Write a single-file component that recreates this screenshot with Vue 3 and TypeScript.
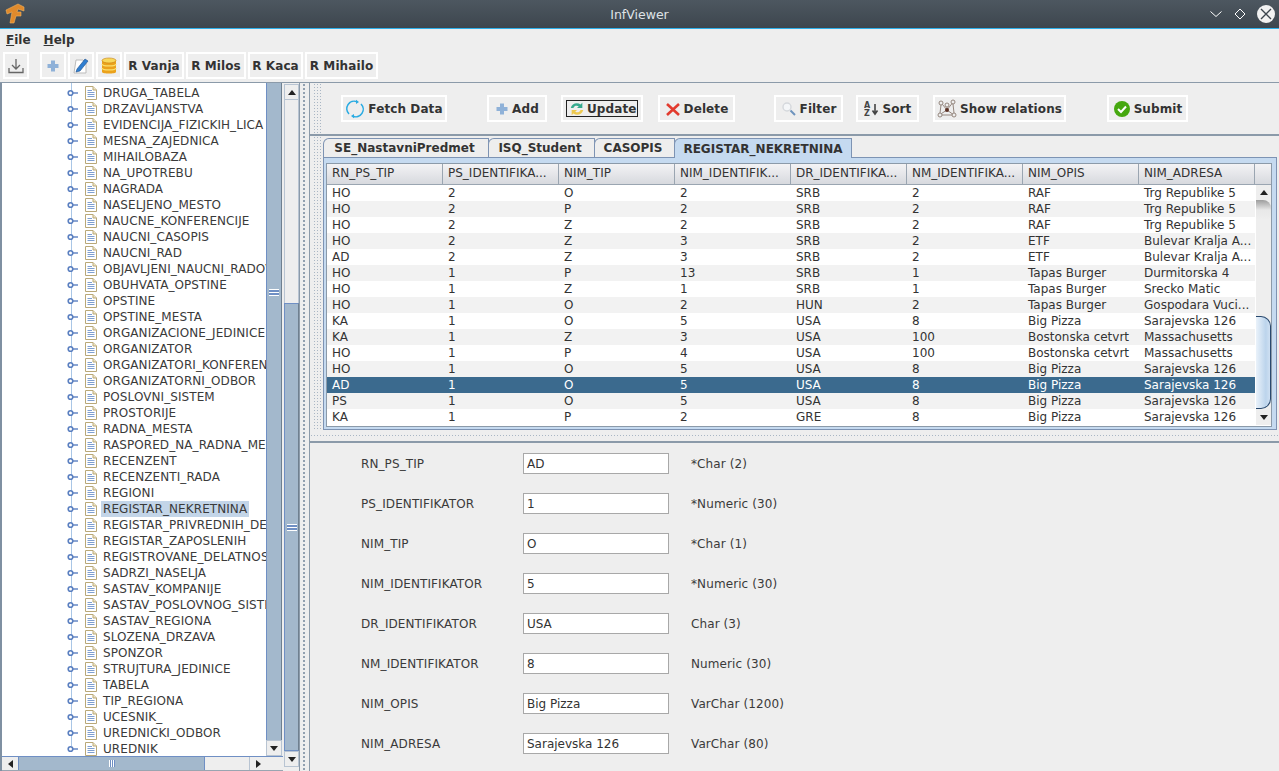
<script setup lang="ts">
const tree: string[] = ['DRUGA_TABELA','DRZAVLJANSTVA','EVIDENCIJA_FIZICKIH_LICA','MESNA_ZAJEDNICA','MIHAILOBAZA','NA_UPOTREBU','NAGRADA','NASELJENO_MESTO','NAUCNE_KONFERENCIJE','NAUCNI_CASOPIS','NAUCNI_RAD','OBJAVLJENI_NAUCNI_RADOVI','OBUHVATA_OPSTINE','OPSTINE','OPSTINE_MESTA','ORGANIZACIONE_JEDINICE','ORGANIZATOR','ORGANIZATORI_KONFERENCIJE','ORGANIZATORNI_ODBOR','POSLOVNI_SISTEM','PROSTORIJE','RADNA_MESTA','RASPORED_NA_RADNA_MESTA','RECENZENT','RECENZENTI_RADA','REGIONI','REGISTAR_NEKRETNINA','REGISTAR_PRIVREDNIH_DELATNOSTI','REGISTAR_ZAPOSLENIH','REGISTROVANE_DELATNOSTI','SADRZI_NASELJA','SASTAV_KOMPANIJE','SASTAV_POSLOVNOG_SISTEMA','SASTAV_REGIONA','SLOZENA_DRZAVA','SPONZOR','STRUJTURA_JEDINICE','TABELA','TIP_REGIONA','UCESNIK_','UREDNICKI_ODBOR','UREDNIK']
const columns: string[] = ['RN_PS_TIP','PS_IDENTIFIKA...','NIM_TIP','NIM_IDENTIFIK...','DR_IDENTIFIKA...','NM_IDENTIFIKA...','NIM_OPIS','NIM_ADRESA']
const rows: string[][] = [
['HO','2','O','2','SRB','2','RAF','Trg Republike 5'],
['HO','2','P','2','SRB','2','RAF','Trg Republike 5'],
['HO','2','Z','2','SRB','2','RAF','Trg Republike 5'],
['HO','2','Z','3','SRB','2','ETF','Bulevar Kralja A...'],
['AD','2','Z','3','SRB','2','ETF','Bulevar Kralja A...'],
['HO','1','P','13','SRB','1','Tapas Burger','Durmitorska 4'],
['HO','1','Z','1','SRB','1','Tapas Burger','Srecko Matic'],
['HO','1','O','2','HUN','2','Tapas Burger','Gospodara Vuci...'],
['KA','1','O','5','USA','8','Big Pizza','Sarajevska 126'],
['KA','1','Z','3','USA','100','Bostonska cetvrt','Massachusetts'],
['HO','1','P','4','USA','100','Bostonska cetvrt','Massachusetts'],
['HO','1','O','5','USA','8','Big Pizza','Sarajevska 126'],
['AD','1','O','5','USA','8','Big Pizza','Sarajevska 126'],
['PS','1','O','5','USA','8','Big Pizza','Sarajevska 126'],
['KA','1','P','2','GRE','8','Big Pizza','Sarajevska 126'],
]
const form = [
{l:'RN_PS_TIP',v:'AD',h:'*Char (2)'},
{l:'PS_IDENTIFIKATOR',v:'1',h:'*Numeric (30)'},
{l:'NIM_TIP',v:'O',h:'*Char (1)'},
{l:'NIM_IDENTIFIKATOR',v:'5',h:'*Numeric (30)'},
{l:'DR_IDENTIFIKATOR',v:'USA',h:'Char (3)'},
{l:'NM_IDENTIFIKATOR',v:'8',h:'Numeric (30)'},
{l:'NIM_OPIS',v:'Big Pizza',h:'VarChar (1200)'},
{l:'NIM_ADRESA',v:'Sarajevska 126',h:'VarChar (80)'},
]
const tools = [
{t:'R Vanja',w:60},{t:'R Milos',w:60},{t:'R Kaca',w:55},{t:'R Mihailo',w:73},
]
const tabs = [
{t:'SE_NastavniPredmet',w:166,a:false},{t:'ISQ_Student',w:107,a:false},{t:'CASOPIS',w:81,a:false},{t:'REGISTAR_NEKRETNINA',w:178,a:true},
]
const actions = [
{t:'Fetch Data',i:'fetch',w:106,m:31},{t:'Add',i:'add',w:60,m:40},{t:'Update',i:'update',w:82,m:14},{t:'Delete',i:'delete',w:77,m:15},
{t:'Filter',i:'filter',w:69,m:39},{t:'Sort',i:'sort',w:63,m:13},{t:'Show relations',i:'rel',w:133,m:14},{t:'Submit',i:'submit',w:81,m:41},
]
</script>

<template>
  <div class="app">
    <header class="title">
      <svg class="logo" width="22" height="22" viewBox="0 0 22 22"><path d="M2 7 L14 1 L20 4 L20 8 L14 6 L13 9 L17 9 L17 13 L12 13 L10 20 L6 20 L8 9 L3 11 Z" fill="#e08a2c" stroke="#f3b35e" stroke-width=".6"/></svg>
      <span class="title-text">InfViewer</span>
      <div class="winbtns">
        <svg width="14" height="14" viewBox="0 0 14 14"><path d="M1.5 4.5 L7 9.5 L12.5 4.5" fill="none" stroke="#fff" stroke-width="1"/></svg>
        <svg width="14" height="14" viewBox="0 0 14 14"><path d="M7 2 L12 7 L7 12 L2 7 Z" fill="none" stroke="#fff" stroke-width="1"/></svg>
        <span class="closeb"><svg width="18" height="18" viewBox="0 0 18 18"><path d="M4 4 L14 14 M14 4 L4 14" stroke="#3c454d" stroke-width="1.4"/></svg></span>
      </div>
    </header>
    <nav class="menu"><span><u>F</u>ile</span><span><u>H</u>elp</span></nav>
    <div class="toolbar">
      <button class="tb icon dl"><svg width="18" height="18" viewBox="0 0 18 18"><path d="M9 2 V12 M5 8 L9 12 L13 8 M2 11 V15.5 H16 V11" fill="none" stroke="#666" stroke-width="1.3"/></svg></button>
      <button class="tb icon first"><svg width="14" height="14" viewBox="0 0 14 14"><path d="M5 1.5 H9 V5 H12.5 V9 H9 V12.5 H5 V9 H1.5 V5 H5 Z" fill="#8fb1d8"/></svg></button>
      <button class="tb icon"><svg width="20" height="20" viewBox="0 0 20 20"><path d="M5 4 H12 L15 7 V17 H3 Z" fill="#fff" stroke="#bbb"/><path d="M6 13 L14 3 L17 5 L9 15 L5 16 Z" fill="#2f7fd1" stroke="#1c4e8a" stroke-width=".6"/></svg></button>
      <button class="tb icon"><svg width="16" height="18" viewBox="0 0 16 18"><path d="M1 3 V15 C1 17 15 17 15 15 V3 Z" fill="#eba21c"/><ellipse cx="8" cy="3.5" rx="7" ry="2.5" fill="#f8d85a" stroke="#c67d10" stroke-width=".6"/><path d="M1 7 C1 9.6 15 9.6 15 7 M1 11 C1 13.6 15 13.6 15 11" fill="none" stroke="#fbe06c" stroke-width="1.2"/></svg></button>
      <button v-for="x in tools" :key="x.t" class="tb" :style="{width: x.w + 'px'}">{{ x.t }}</button>
    </div>
    <main class="main">
      <aside class="left">
        <div class="left-inner">
          <div class="tree-wrap">
            <div class="tree">
              <div v-for="n in tree" :key="n" class="tree-row">
                <svg class="handle" width="12" height="8" viewBox="0 0 12 8"><circle cx="3.5" cy="4" r="2.3" fill="#fff" stroke="#5a7fc0" stroke-width="1.6"/><path d="M6 4 H11" stroke="#5a7fc0" stroke-width="1.4"/></svg>
                <svg class="doc" width="12" height="14" viewBox="0 0 12 14"><path d="M.5 .5 H8 L11.5 4 V13.5 H.5 Z" fill="#fff" stroke="#b9a878"/><path d="M8 .5 V4 H11.5" fill="#f0e6c4" stroke="#b9a878"/><path d="M2.5 4.5 H7 M2.5 6.5 H9.5 M2.5 8.5 H9.5 M2.5 10.5 H9.5" stroke="#7f9fd0"/></svg>
                <span class="tree-label" :class="{sel: n === 'REGISTAR_NEKRETNINA'}">{{ n }}</span>
              </div>
            </div>
            <div class="vbar inner">
              <div class="thumb t1"><i class="grip"></i></div>
              <div class="arrow-b"><b class="dn"></b></div>
            </div>
          </div>
          <div class="hbar">
            <div class="h-arrow"><b class="lt"></b></div>
            <div class="h-thumb"><i class="vgrip"></i></div>
            <div class="h-track"></div>
            <div class="h-arrow"><b class="rt"></b></div>
            <div class="h-corner"></div>
          </div>
        </div>
        <div class="vbar outer">
          <div class="arrow-b"><b class="up"></b></div>
          <div class="track"></div>
          <div class="thumb t2"><i class="grip"></i></div>
          <div class="arrow-b"><b class="dn"></b></div>
        </div>
      </aside>
      <div class="vsplit"></div>
      <section class="right">
        <div class="actions">
          <div class="grip-dots"></div>
          <button v-for="a in actions" :key="a.t" class="tb act" :style="{width: a.w + 'px', marginLeft: a.m + 'px'}">
            <span class="act-in" :class="{focus: a.i==='update'}">
              <svg v-if="a.i==='fetch'" width="20" height="20" viewBox="0 0 20 20"><path d="M4 15 A7.5 7.5 0 0 1 12 2.7 M16 5 A7.5 7.5 0 0 1 8 17.3" fill="none" stroke="#29abe2" stroke-width="1.6"/><path d="M11 .8 L14 3 L11 5 Z M9 15 L6 17 L9 19.2 Z" fill="#29abe2"/></svg>
              <svg v-else-if="a.i==='add'" width="14" height="14" viewBox="0 0 14 14"><path d="M5 1.5 H9 V5 H12.5 V9 H9 V12.5 H5 V9 H1.5 V5 H5 Z" fill="#8fb1d8"/></svg>
              <svg v-else-if="a.i==='update'" width="18" height="16" viewBox="0 0 18 18"><path d="M2 8 C3 3 9 1 13 4 L15 2 V8 H9 L11 6 C9 5 6 5 5 8 Z" fill="#35a98e"/><path d="M16 10 C15 15 9 17 5 14 L3 16 V10 H9 L7 12 C9 13 12 13 13 10 Z" fill="#eec94f"/></svg>
              <svg v-else-if="a.i==='delete'" width="16" height="16" viewBox="0 0 16 16"><path d="M2 3 L14 14 M14 3 L2 14" stroke="#e23b2e" stroke-width="2.6"/></svg>
              <svg v-else-if="a.i==='filter'" width="16" height="16" viewBox="0 0 16 16"><circle cx="6" cy="6" r="4" fill="#f4f6f8" stroke="#d5d8dc" stroke-width="1.4"/><path d="M9.5 9.5 L14 14" stroke="#6d93bd" stroke-width="2"/></svg>
              <svg v-else-if="a.i==='sort'" width="16" height="16" viewBox="0 0 16 16"><text x="0" y="7" font-size="8" font-weight="700" fill="#444" font-family="DejaVu Sans">A</text><text x="0" y="15" font-size="8" font-weight="700" fill="#444" font-family="DejaVu Sans">Z</text><path d="M11 3 V12 M8.5 9.5 L11 13 L13.5 9.5" fill="none" stroke="#444" stroke-width="1.6"/></svg>
              <svg v-else-if="a.i==='rel'" width="20" height="20" viewBox="0 0 20 20"><g fill="none" stroke="#8a7a72" stroke-width=".9"><circle cx="4" cy="4" r="2"/><circle cx="16" cy="3" r="2"/><circle cx="3" cy="16" r="2"/><circle cx="17" cy="16" r="2"/><circle cx="10" cy="6" r="2"/><path d="M5.5 5.5 L10 11 L15 4.5 M4.5 14.5 L10 11 L15.5 15 M10 8 V11 M5 16 H15 M4 6 L3 14 M16 5 L17 14"/></g><circle cx="10" cy="11" r="2" fill="#5a2f22"/></svg>
              <svg v-else width="18" height="18" viewBox="0 0 18 18"><circle cx="9" cy="9" r="8" fill="#46a80f"/><path d="M5 9 L8 12 L13 6.5" fill="none" stroke="#fff" stroke-width="2"/></svg>
              <span>{{ a.t }}</span>
            </span>
          </button>
        </div>
        <div class="tabs-area">
          <div class="grip-dots low"></div>
          <div class="tabs-col">
            <div class="tabs">
              <div v-for="t in tabs" :key="t.t" class="tab" :class="{active: t.a}" :style="{width: t.w + 'px'}">{{ t.t }}</div>
            </div>
            <div class="pane">
              <div class="table">
                <div class="thead">
                  <div v-for="c in columns" :key="c" class="th">{{ c }}</div>
                  <div class="th corner"></div>
                </div>
                <div class="tbody">
                  <div class="trows">
                    <div v-for="(r, i) in rows" :key="i" class="tr" :class="{odd: i % 2 === 1, selected: i === 12}">
                      <div v-for="(v, j) in r" :key="j" class="td">{{ v }}</div>
                    </div>
                  </div>
                  <div class="tvbar">
                    <div class="tarrow"><b class="up"></b></div>
                    <div class="ttrack"></div>
                    <div class="tthumb"></div>
                    <div class="tarrow"><b class="dn"></b></div>
                  </div>
                </div>
              </div>
            </div>
          </div>
        </div>
        <div class="hsplit"><div class="dots-h"></div></div>
        <div class="form">
          <div v-for="f in form" :key="f.l" class="frow">
            <label>{{ f.l }}</label>
            <div class="input">{{ f.v }}</div>
            <span class="hint">{{ f.h }}</span>
          </div>
        </div>
      </section>
    </main>
  </div>
</template>

<style>
html, body { margin: 0; padding: 0; overflow: hidden; background: #eeeeee; }
</style>

<style scoped>
.app { width: 1279px; height: 771px; display: flex; flex-direction: column; background: #eeeeee; color: #333; font: 12px "DejaVu Sans", sans-serif; overflow: hidden; }
.title { height: 28px; box-sizing: content-box; border-bottom: 1px solid #2eb0ea; background: linear-gradient(#4d5760, #3d464e); display: flex; align-items: center; position: relative; flex: none; }
.logo { margin-left: 4px; }
.title-text { position: absolute; left: 0; right: 0; text-align: center; color: #dfe3e6; font-size: 12.5px; }
.winbtns { margin-left: auto; display: flex; align-items: center; gap: 10px; margin-right: 4px; position: relative; }
.closeb { width: 18px; height: 18px; border-radius: 50%; background: #f2f2f2; display: block; }
.closeb svg { display: block; }
.menu { height: 21px; display: flex; align-items: center; gap: 13px; padding-left: 6px; font-weight: 700; font-size: 12px; color: #333; flex: none; }
.toolbar { height: 32px; display: flex; align-items: flex-start; padding-left: 3px; padding-top: 2px; gap: 2px; flex: none; box-sizing: border-box; }
.tb { height: 27px; box-sizing: border-box; border: 2px solid #fff; background: #eeeeee; font: 700 12px "DejaVu Sans", sans-serif; letter-spacing: .1px; color: #333; padding: 0; display: flex; align-items: center; justify-content: center; white-space: nowrap; }
.tb.icon { width: 26px; }
.tb.first { margin-left: 9px; }
.main { flex: 1; min-height: 0; display: flex; border-top: 1px solid #8b9aa9; }
.left { width: 300px; display: flex; background: #eee; border-left: 2px solid #7f90a2; border-right: 1px solid #8b9aa9; box-sizing: border-box; flex: none; }
.left-inner { width: 281px; display: flex; flex-direction: column; flex: none; }
.tree-wrap { flex: 1; min-height: 0; display: flex; }
.tree { width: 264px; background: #fff; overflow: hidden; padding-top: 2px; box-sizing: border-box; position: relative; flex: none; }
.tree::before { content: ""; position: absolute; left: 69px; top: 0; bottom: 10px; width: 1px; background: #a9c6e6; }
.tree-row { height: 16px; display: flex; align-items: center; white-space: nowrap; padding-left: 65px; position: relative; }
.handle { flex: none; }
.doc { flex: none; margin-left: 6px; }
.tree-label { margin-left: 4px; padding: 0 2px 0 2px; line-height: 16px; color: #3a3a3a; letter-spacing: .08px; }
.tree-label.sel { background: #c3d5e8; }
.vbar { width: 15px; display: flex; flex-direction: column; flex: none; background: #eee; }
.vbar.inner { width: 16px; }
.thumb { background: #a3b8cc; border-left: 1px solid #6f8fc4; border-right: 1px solid #6f8090; box-sizing: border-box; display: flex; align-items: center; justify-content: center; }
.t1 { flex: 1; align-items: flex-start; }
.t1 .grip { margin-top: 206px; }
.t2 { height: 448px; border-top: 1px solid #6f8fc4; border-bottom: 1px solid #6f8fc4; }
.track { height: 203px; background: #eee; border: 1px solid #b8c4d2; border-width: 0 1px; box-sizing: border-box; }
.grip { display: block; width: 10px; height: 7px; background: repeating-linear-gradient(#fff 0 1px, #6f8fc4 1px 3px); }
.arrow-b { height: 16px; flex: none; background: #eee; border: 1px solid #b8c4d2; box-sizing: border-box; display: flex; align-items: center; justify-content: center; }
b.up, b.dn, b.lt, b.rt { display: block; width: 0; height: 0; border: 4px solid transparent; }
b.up { border-bottom: 5px solid #222; border-top: 0; }
b.dn { border-top: 5px solid #222; border-bottom: 0; }
b.lt { border-right: 5px solid #222; border-left: 0; }
b.rt { border-left: 5px solid #222; border-right: 0; }
.hbar { height: 13px; display: flex; flex: none; background: #eee; border-top: 1px solid #6f8fc4; border-bottom: 1px solid #9aa5b1; }
.h-arrow { width: 16px; display: flex; align-items: center; justify-content: center; flex: none; }
.h-thumb { width: 187px; background: #a3b8cc; border-right: 1px solid #6f8fc4; border-left: 1px solid #6f8fc4; display: flex; align-items: center; justify-content: center; flex: none; box-sizing: border-box; }
.vgrip { display: block; width: 6px; height: 7px; background: repeating-linear-gradient(90deg, #fff 0 1px, #6f8fc4 1px 2px); }
.h-track { width: 45px; flex: none; border-right: 1px solid #b8c4d2; box-sizing: border-box; }
.h-corner { width: 16px; flex: none; }
.outer { margin-left: 1px; width: 15px; margin-top: 1px; margin-bottom: 1px; }
.vsplit { width: 10px; flex: none; box-sizing: border-box; border-right: 1px solid #8b9aa9; background-image: radial-gradient(#8a9aab .7px, transparent .8px); background-size: 4px 4px; background-position: 2px 0; background-repeat: repeat-y; background-color: #eee; }
.right { flex: 1; min-width: 0; display: flex; flex-direction: column; }
.actions { height: 53px; display: flex; align-items: center; flex: none; border-bottom: 2px solid #8b9aa9; box-sizing: border-box; position: relative; }
.grip-dots { width: 9px; align-self: stretch; flex: none; background-image: radial-gradient(#a9b6c4 .7px, transparent .8px); background-size: 3px 3px; background-color: #eee; margin-left: 3px; margin-right: -12px; }
.act-in { display: flex; align-items: center; gap: 3px; }
.act svg { flex: none; }
.focus { border: 1px solid #222; height: 17px; width: 72px; box-sizing: border-box; gap: 1px; padding-left: 1px; }
.tabs-area { height: 294px; flex: none; display: flex; }
.tabs-area .low { margin-right: 0; width: 8px; margin-left: 3px; }
.tabs-col { flex: 1; min-width: 0; display: flex; flex-direction: column; margin-left: 2px; }
.tabs { height: 20px; margin-top: 1px; display: flex; align-items: flex-end; flex: none; position: relative; z-index: 1; }
.tab { height: 19px; box-sizing: border-box; border: 1px solid #7d93b3; border-bottom: 0; border-top-left-radius: 6px; background: #eee; font-weight: 700; font-size: 12px; display: flex; align-items: center; justify-content: center; margin-right: -1px; padding-right: 3px; color: #333; }
.tab.active { background: #c5daf0; height: 20px; position: relative; margin-bottom: -1px; padding-right: 0; }
.pane { flex: 1; min-height: 0; margin-right: 2px; background: #c5daf0; border: 1px solid #7d93b3; box-sizing: border-box; padding: 5px 3px 4px 2px; }
.table { border: 1px solid #8b9aa9; background: #fff; width: 946px; height: 264px; box-sizing: border-box; }
.thead { height: 21px; display: flex; box-sizing: border-box; border-bottom: 1px solid #9aa5b1; background: linear-gradient(#f3f3f5, #d7d9de); }
.th { width: 116px; flex: none; box-sizing: border-box; border-right: 1px solid #9aa5b1; padding-left: 5px; line-height: 19px; color: #333; white-space: nowrap; overflow: hidden; }
.th.corner { width: 16px; border: 0; }
.tbody { display: flex; }
.trows { width: 928px; flex: none; }
.tr { display: flex; height: 16px; background: #fff; }
.tr.odd { background: #f2f2f2; }
.tr.selected { background: #3b6a8e; color: #fff; }
.td { width: 116px; flex: none; box-sizing: border-box; padding-left: 5px; line-height: 16px; white-space: nowrap; overflow: hidden; }
.tvbar { width: 15px; flex: none; margin-left: 1px; display: flex; flex-direction: column; background: #eee; height: 240px; }
.tarrow { height: 15px; flex: none; display: flex; align-items: center; justify-content: center; background: #eee; }
.ttrack { height: 116px; flex: none; border-radius: 0 8px 0 0; background: linear-gradient(#9d9d9d, #e8e8e8 10px, #eee 20px); }
.tthumb { flex: 1; margin-bottom: 1px; background: linear-gradient(90deg, #eaf2fa, #bcd4ec 70%, #cfe0f2); border: 1px solid #29496e; border-left: 0; border-radius: 0 10px 10px 0; box-sizing: border-box; }
.hsplit { height: 11px; flex: none; border-bottom: 2px solid #8b9aa9; box-sizing: content-box; display: flex; align-items: center; }
.dots-h { width: 100%; height: 3px; background-image: radial-gradient(#a9b6c4 .7px, transparent .8px); background-size: 3px 3px; }
.form { flex: 1; min-height: 0; overflow: hidden; }
.frow { height: 40px; display: flex; align-items: center; padding-left: 51px; }
.frow label { width: 162px; flex: none; color: #3a3a3a; letter-spacing: .1px; margin-top: 2px; }
.input { width: 146px; height: 21px; flex: none; box-sizing: border-box; border: 1px solid #a8a8a8; background: #fff; padding-left: 3px; line-height: 20px; color: #333; }
.hint { margin-left: 22px; color: #3a3a3a; letter-spacing: .1px; margin-top: 2px; }
</style>
